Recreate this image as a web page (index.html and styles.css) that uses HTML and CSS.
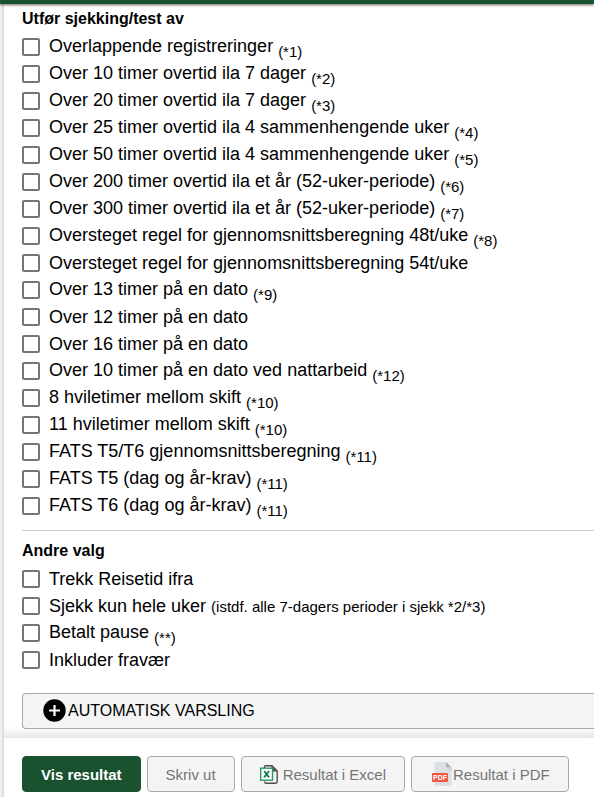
FILE: index.html
```html
<!DOCTYPE html>
<html lang="no">
<head>
    <meta charset="utf-8">
    <meta name="viewport" content="width=device-width, initial-scale=1">
    <title>Sjekk av registreringer</title>
    <link rel="stylesheet" href="styles.css">
</head>
<body>
    <header class="topbar"></header>
    <form class="panel">
        <div class="content">
            <fieldset class="group">
                <legend>Utfør sjekking/test av</legend>
                <div class="option"><input type="checkbox" id="overlapp"><label for="overlapp">Overlappende registreringer <sub>(*1)</sub></label></div>
                <div class="option"><input type="checkbox" id="o10-7"><label for="o10-7">Over 10 timer overtid ila 7 dager <sub>(*2)</sub></label></div>
                <div class="option"><input type="checkbox" id="o20-7"><label for="o20-7">Over 20 timer overtid ila 7 dager <sub>(*3)</sub></label></div>
                <div class="option"><input type="checkbox" id="o25-4"><label for="o25-4">Over 25 timer overtid ila 4 sammenhengende uker <sub>(*4)</sub></label></div>
                <div class="option"><input type="checkbox" id="o50-4"><label for="o50-4">Over 50 timer overtid ila 4 sammenhengende uker <sub>(*5)</sub></label></div>
                <div class="option"><input type="checkbox" id="o200"><label for="o200">Over 200 timer overtid ila et år (52-uker-periode) <sub>(*6)</sub></label></div>
                <div class="option"><input type="checkbox" id="o300"><label for="o300">Over 300 timer overtid ila et år (52-uker-periode) <sub>(*7)</sub></label></div>
                <div class="option"><input type="checkbox" id="snitt48"><label for="snitt48">Oversteget regel for gjennomsnittsberegning 48t/uke <sub>(*8)</sub></label></div>
                <div class="option"><input type="checkbox" id="snitt54"><label for="snitt54">Oversteget regel for gjennomsnittsberegning 54t/uke</label></div>
                <div class="option"><input type="checkbox" id="dato13"><label for="dato13">Over 13 timer på en dato <sub>(*9)</sub></label></div>
                <div class="option"><input type="checkbox" id="dato12"><label for="dato12">Over 12 timer på en dato</label></div>
                <div class="option"><input type="checkbox" id="dato16"><label for="dato16">Over 16 timer på en dato</label></div>
                <div class="option"><input type="checkbox" id="natt10"><label for="natt10">Over 10 timer på en dato ved nattarbeid <sub>(*12)</sub></label></div>
                <div class="option"><input type="checkbox" id="hvile8"><label for="hvile8">8 hviletimer mellom skift <sub>(*10)</sub></label></div>
                <div class="option"><input type="checkbox" id="hvile11"><label for="hvile11">11 hviletimer mellom skift <sub>(*10)</sub></label></div>
                <div class="option"><input type="checkbox" id="fats"><label for="fats">FATS T5/T6 gjennomsnittsberegning <sub>(*11)</sub></label></div>
                <div class="option"><input type="checkbox" id="fats5"><label for="fats5">FATS T5 (dag og år-krav) <sub>(*11)</sub></label></div>
                <div class="option"><input type="checkbox" id="fats6"><label for="fats6">FATS T6 (dag og år-krav) <sub>(*11)</sub></label></div>
            </fieldset>

            <hr>

            <fieldset class="group">
                <legend>Andre valg</legend>
                <div class="option"><input type="checkbox" id="reisetid"><label for="reisetid">Trekk Reisetid ifra</label></div>
                <div class="option"><input type="checkbox" id="heleuker"><label for="heleuker">Sjekk kun hele uker <small>(istdf. alle 7-dagers perioder i sjekk *2/*3)</small></label></div>
                <div class="option"><input type="checkbox" id="pause"><label for="pause">Betalt pause <sub>(**)</sub></label></div>
                <div class="option"><input type="checkbox" id="fravaer"><label for="fravaer">Inkluder fravær</label></div>
            </fieldset>

            <button type="button" class="expander">
                <svg width="24" height="24" viewBox="0 0 24 24" aria-hidden="true">
                    <circle cx="11.5" cy="11.5" r="11.2" fill="#000"/>
                    <path d="M11.5 6v11M6 11.5h11" stroke="#fff" stroke-width="2.2"/>
                </svg>
                AUTOMATISK VARSLING
            </button>
        </div>

        <footer class="actions">
            <button type="submit" class="btn btn-primary">Vis resultat</button>
            <button type="button" class="btn">Skriv ut</button>
            <button type="button" class="btn btn-excel">
                <svg width="18" height="19" viewBox="0 0 18 19" aria-hidden="true">
                    <path d="M4.5 3V2q0-1.3 1.3-1.3H12L17.2 6v10.5q0 1.7-1.7 1.7H6q-1.5 0-1.5-1.7" fill="#f4f4f4" stroke="#4d4d4d" stroke-width="1.4"/>
                    <path d="M11.5.7 17.3 6.5h-4.4q-1.4 0-1.4-1.4z" fill="#4d4d4d"/>
                    <rect x=".7" y="3.2" width="11.8" height="12" fill="#fff" stroke="#2b965c" stroke-width="1.4"/>
                    <path d="M4.2 6 9 12.4M9 6 4.2 12.4" stroke="#17824a" stroke-width="1.9"/>
                </svg>
                Resultat i Excel
            </button>
            <button type="button" class="btn btn-pdf">
                <svg width="20" height="24" viewBox="0 0 20 24" aria-hidden="true">
                    <path d="M2.5 0H14l5.5 5.5V23q0 1-1 1h-15q-1 0-1-1z" fill="#dce0e4"/>
                    <path d="M14 0v4.5q0 1 1 1h4.5z" fill="#abb3bb"/>
                    <path d="M15 5.5h4.5V10z" fill="#c8cdd2"/>
                    <rect y="11" width="16" height="9" rx=".7" fill="#f15642"/>
                    <text x="8" y="18" text-anchor="middle" class="pdf-tag">PDF</text>
                </svg>
                Resultat i PDF
            </button>
        </footer>
    </form>
</body>
</html>
```

FILE: styles.css
```css
* {
    box-sizing: border-box;
}

body {
    margin: 0;
    background: #f0f0f0;
    color: #000;
    font-family: "Liberation Sans", Arial, sans-serif;
    font-size: 18px;
    overflow-x: hidden;
}

.topbar {
    position: relative;
    height: 4px;
    background: #1a512e;
    box-shadow: 0 1px 3px rgba(0,0,0,0.6);
}

.panel {
    margin-left: 4px;
    background: white;
    box-shadow: 0 0 3px rgba(0,0,0,0.25);
}

.content {
    padding: 5px 0 9px 18px;
    box-shadow: inset 0 -12px 10px -8px rgba(0,0,0,0.12);
}

.group {
    border: none;
    margin: 0;
    padding: 0;
    min-width: 0;
}

legend {
    padding: 0 0 5px;
    font-size: 16px;
    font-weight: bold;
    line-height: 20px;
}

.option {
    display: flex;
    align-items: center;
    gap: 9px;
    height: 27px;
}

.option input {
    appearance: none;
    flex: none;
    width: 18px;
    height: 18px;
    margin: 0 0 1px;
    border: 2px solid #767676;
    border-radius: 2px;
    background: white;
}

.option input:checked {
    border-color: #1a512e;
    background: #1a512e;
}

.option sub,
.option small {
    font-size: 15px;
}

hr {
    margin: 10px 0;
    border: none;
    border-top: 1px solid #ccc;
}

.expander {
    display: flex;
    align-items: center;
    gap: 1px;
    width: 100%;
    height: 36px;
    margin-top: 19px;
    padding: 0 20px;
    border: 1px solid #a9a9a9;
    border-right: none;
    border-radius: 4px 0 0 4px;
    background: #f4f4f4;
    color: #000;
    font-family: inherit;
    font-size: 16px;
    cursor: pointer;
}

.actions {
    display: flex;
    flex-wrap: wrap;
    gap: 6px;
    padding: 18px 18px 5px;
    background: white;
}

.btn {
    display: flex;
    align-items: center;
    gap: 5px;
    height: 36px;
    padding: 0 18px;
    border: 1px solid #a9a9a9;
    border-radius: 4px;
    background: #f4f4f4;
    color: #757575;
    font-family: inherit;
    font-size: 15px;
    cursor: pointer;
}

.btn-primary {
    border-color: #1a512e;
    background: #1a512e;
    color: white;
    font-weight: bold;
}

.btn-pdf {
    gap: 1px;
    padding-left: 20px;
}

.pdf-tag {
    fill: white;
    font-size: 7px;
    font-weight: bold;
}
```
